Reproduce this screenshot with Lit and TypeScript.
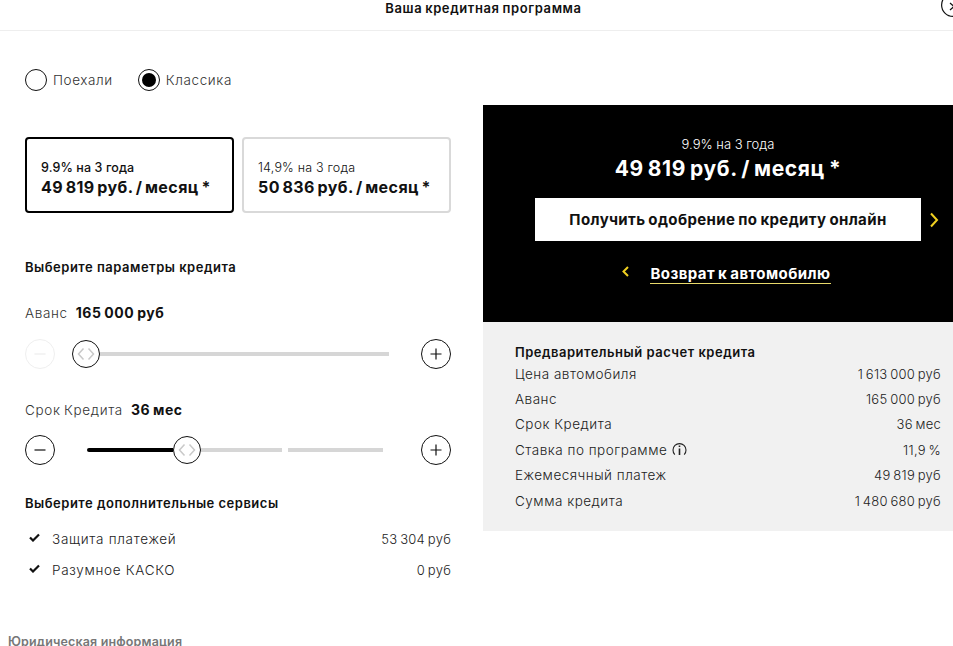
import { LitElement, html, css, svg } from 'lit';
import { customElement } from 'lit/decorators.js';

const summary = [
  { label: 'Цена автомобиля', value: '1 613 000 руб' },
  { label: 'Аванс', value: '165 000 руб' },
  { label: 'Срок Кредита', value: '36 мес' },
  { label: 'Ставка по программе', value: '11,9 %', info: true },
  { label: 'Ежемесячный платеж', value: '49 819 руб' },
  { label: 'Сумма кредита', value: '1 480 680 руб' },
];

const services = [
  { label: 'Защита платежей', value: '53 304 руб' },
  { label: 'Разумное КАСКО', value: '0 руб' },
];

const chevron = (dir: 'left' | 'right') => svg`
  <path d=${dir === 'right' ? 'M2 1.5 L8 8 L2 14.5' : 'M6 1 L1.5 5.5 L6 10'} fill="none" stroke="#f0d020" stroke-width="2"/>
`;

@customElement('app-root')
export class AppRoot extends LitElement {
  static styles = css`
    :host {
      display: block;
      height: 646px;
      overflow: hidden;
      background: #fff;
      color: #111;
      font-family: Inter, 'Liberation Sans', sans-serif;
      font-size: 13px;
    }

    .header {
      position: relative;
      height: 31px;
      box-sizing: border-box;
      padding: 0 0 14px 14px;
      border-bottom: 1px solid #eee;
      display: flex;
      align-items: center;
      justify-content: center;
      font-size: 13px;
      font-weight: 600;
      letter-spacing: 0.6px;
      word-spacing: -1px;
    }

    .close {
      position: absolute;
      left: 941px;
      top: -7px;
      width: 24px;
      height: 24px;
    }

    .main {
      display: grid;
      grid-template-columns: 483px 470px;
    }

    .left {
      padding: 37px 32px 0 25px;
      position: relative;
    }

    .radios {
      display: flex;
      align-items: center;
      height: 23px;
      font-size: 13.5px;
      font-weight: 300;
      color: #333;
      letter-spacing: 0.6px;
    }

    .radio {
      display: flex;
      align-items: center;
      gap: 6px;
      margin-right: 25px;
    }

    .dot {
      width: 20px;
      height: 20px;
      border: 1px solid #111;
      border-radius: 50%;
      display: flex;
      align-items: center;
      justify-content: center;
    }

    .dot.on::after {
      content: '';
      width: 14px;
      height: 14px;
      border-radius: 50%;
      background: #000;
    }

    .cards {
      display: grid;
      grid-template-columns: 209px 209px;
      gap: 8px;
      margin-top: 46px;
    }

    .card {
      height: 76px;
      box-sizing: border-box;
      padding: 20px 14px 0;
      border: 2px solid #d9d9d9;
      border-radius: 4px;
    }

    .card.on {
      border-color: #000;
    }

    .card .rate {
      font-weight: 300;
      font-size: 12.5px;
      line-height: 17px;
      letter-spacing: 0.2px;
    }

    .card.on .rate {
      font-weight: 500;
      letter-spacing: 0.1px;
    }

    .card .price {
      font-size: 16px;
      font-weight: 700;
      line-height: 22px;
      letter-spacing: 0.43px;
      word-spacing: -1.6px;
      white-space: nowrap;
    }

    .section {
      font-size: 13px;
      font-weight: 600;
      line-height: 16px;
      letter-spacing: 0.5px;
    }

    .params {
      margin-top: 46px;
    }

    .param {
      display: flex;
      gap: 8px;
      align-items: baseline;
      font-size: 13.5px;
      font-weight: 300;
      line-height: 18px;
      letter-spacing: 0.65px;
      word-spacing: -1px;
      color: #333;
    }

    .param b {
      font-weight: 700;
      font-size: 14px;
      color: #111;
      letter-spacing: 0.55px;
    }

    .param.first {
      margin-top: 29px;
    }

    .param.second {
      margin-top: 32px;
    }

    .slider {
      display: flex;
      align-items: center;
      height: 30px;
      margin-top: 17px;
    }

    .param.second + .slider {
      margin-top: 16px;
    }

    .step {
      width: 30px;
      height: 30px;
      flex: none;
      box-sizing: border-box;
      border: 1px solid #111;
      border-radius: 50%;
      position: relative;
    }

    .step svg {
      display: block;
      width: 28px;
      height: 28px;
    }

    .step.off {
      border-color: #efefef;
    }

    .track {
      flex: 1;
      display: flex;
      align-items: center;
      height: 28px;
      margin: 0 32px 0 17px;
    }

    .track.wide {
      margin: 0 38px 0 32px;
    }

    .bar {
      height: 4px;
      background: #d6d6d6;
    }

    .bar.fill {
      background: #000;
      border-radius: 2px 0 0 2px;
    }

    .thumb {
      width: 28px;
      height: 28px;
      flex: none;
      box-sizing: border-box;
      border: 1px solid #111;
      border-radius: 50%;
      background: #fff;
    }

    .thumb svg {
      display: block;
      width: 26px;
      height: 26px;
    }

    .extras {
      margin-top: 30px;
    }

    .services {
      margin-top: 12px;
    }

    .service {
      display: flex;
      align-items: center;
      height: 31px;
      font-size: 13.5px;
      font-weight: 300;
      color: #222;
      letter-spacing: 0.7px;
    }

    .check {
      width: 11px;
      height: 9px;
      margin: 0 12px 2px 4px;
      flex: none;
    }

    .service .value {
      margin-left: auto;
      font-size: 13px;
      letter-spacing: 0.24px;
      word-spacing: -1px;
    }

    .legal {
      margin: 48px 0 0 -17px;
      font-size: 12.5px;
      font-weight: 600;
      line-height: 18px;
      letter-spacing: 0.15px;
      color: #777;
    }

    .right {
      margin-top: 74px;
    }

    .promo {
      height: 217px;
      box-sizing: border-box;
      padding: 31px 0 0 20px;
      background: #000;
      color: #fff;
      display: flex;
      flex-direction: column;
      align-items: center;
    }

    .promo .rate {
      font-weight: 300;
      line-height: 16px;
      font-size: 13px;
    }

    .promo .price {
      margin-top: 1px;
      font-size: 21px;
      font-weight: 700;
      line-height: 32px;
      letter-spacing: 0.6px;
      word-spacing: -1.5px;
    }

    .cta-row {
      display: flex;
      align-items: center;
      margin: 13px 0 0 18px;
    }

    .cta {
      width: 386px;
      height: 43px;
      box-sizing: border-box;
      background: #fff;
      color: #111;
      display: flex;
      align-items: center;
      justify-content: center;
      padding-bottom: 1px;
      font-size: 15px;
      font-weight: 700;
      letter-spacing: 0.38px;
      word-spacing: -1px;
    }

    .cta-row svg {
      width: 10px;
      height: 16px;
      margin-left: 8px;
    }

    .back {
      display: flex;
      align-items: center;
      gap: 21px;
      margin: 23px 3px 0 0;
    }

    .back svg {
      width: 7px;
      height: 11px;
      margin-bottom: 5px;
    }

    .back a {
      font-size: 15px;
      font-weight: 700;
      line-height: 19px;
      letter-spacing: 0.45px;
      word-spacing: -1px;
      border-bottom: 1px solid #e8d96a;
    }

    .calc {
      height: 209px;
      box-sizing: border-box;
      padding: 22px 12px 0 32px;
      background: #f1f1f1;
    }

    .rows {
      margin-top: 1px;
    }

    .row {
      display: flex;
      align-items: center;
      justify-content: space-between;
      height: 25.4px;
      font-size: 13.5px;
      font-weight: 300;
      color: #222;
      letter-spacing: 0.5px;
    }

    .row .name {
      display: flex;
      align-items: center;
      gap: 5px;
    }

    .row .value {
      font-size: 13px;
      letter-spacing: 0.27px;
      word-spacing: -1.2px;
    }

    .info {
      width: 15px;
      height: 15px;
    }
  `;

  private renderStep(kind: 'minus' | 'plus', off = false) {
    const stroke = off ? '#ececec' : '#111';
    return html`
      <div class="step ${off ? 'off' : ''}">
        <svg viewBox="0 0 28 28">
          <path d=${kind === 'plus' ? 'M8.5 14H19.5M14 8.5V19.5' : 'M8.5 14H19.5'} stroke=${stroke} stroke-width="1.2" fill="none" />
        </svg>
      </div>
    `;
  }

  private renderThumb() {
    return html`
      <div class="thumb">
        <svg viewBox="0 0 26 26">
          <path d="M10.5 7.5L5.5 13L10.5 18.5M15.5 7.5L20.5 13L15.5 18.5" stroke="#c9c9c9" stroke-width="1.5" fill="none" />
        </svg>
      </div>
    `;
  }

  render() {
    return html`
      <div class="header">
        Ваша кредитная программа
        <svg class="close" viewBox="0 0 24 24">
          <circle cx="12" cy="12" r="11.4" fill="none" stroke="#111" stroke-width="1.2" />
          <path d="M9 10L13 13.5L9 17" fill="none" stroke="#111" stroke-width="1.2" />
        </svg>
      </div>
      <div class="main">
        <div class="left">
          <div class="radios">
            <div class="radio"><span class="dot"></span>Поехали</div>
            <div class="radio"><span class="dot on"></span>Классика</div>
          </div>
          <div class="cards">
            <div class="card on">
              <div class="rate">9.9% на 3 года</div>
              <div class="price">49 819 руб. / месяц *</div>
            </div>
            <div class="card">
              <div class="rate">14,9% на 3 года</div>
              <div class="price">50 836 руб. / месяц *</div>
            </div>
          </div>
          <div class="section params">Выберите параметры кредита</div>
          <div class="param first">Аванс <b>165 000 руб</b></div>
          <div class="slider">
            ${this.renderStep('minus', true)}
            <div class="track">
              ${this.renderThumb()}
              <div class="bar" style="flex:1"></div>
            </div>
            ${this.renderStep('plus')}
          </div>
          <div class="param second">Срок Кредита <b>36 мес</b></div>
          <div class="slider">
            ${this.renderStep('minus')}
            <div class="track wide">
              <div class="bar fill" style="width:86px"></div>
              ${this.renderThumb()}
              <div class="bar" style="width:81px"></div>
              <div class="bar" style="width:95px;margin-left:6px"></div>
            </div>
            ${this.renderStep('plus')}
          </div>
          <div class="section extras">Выберите дополнительные сервисы</div>
          <div class="services">
            ${services.map(
              (s) => html`
                <div class="service">
                  <svg class="check" viewBox="0 0 11 9">
                    <path d="M1 4.5L4 7.5L10 1.5" fill="none" stroke="#111" stroke-width="2.2" />
                  </svg>
                  ${s.label}
                  <span class="value">${s.value}</span>
                </div>
              `
            )}
          </div>
          <div class="legal">Юридическая информация</div>
        </div>
        <div class="right">
          <div class="promo">
            <div class="rate">9.9% на 3 года</div>
            <div class="price">49 819 руб. / месяц *</div>
            <div class="cta-row">
              <div class="cta">Получить одобрение по кредиту онлайн</div>
              <svg viewBox="0 0 10 16">${chevron('right')}</svg>
            </div>
            <div class="back">
              <svg viewBox="0 0 7 11">${chevron('left')}</svg>
              <a>Возврат к автомобилю</a>
            </div>
          </div>
          <div class="calc">
            <div class="section">Предварительный расчет кредита</div>
            <div class="rows">
              ${summary.map(
                (r) => html`
                  <div class="row">
                    <span class="name">
                      ${r.label}
                      ${r.info
                        ? html`<svg class="info" viewBox="0 0 15 15">
                            <path d="M2.8 12.6A6.5 6.5 0 1 1 12.2 12.6" fill="none" stroke="#222" stroke-width="1.1" />
                            <path d="M7.5 6.5V13M7.5 3.4V5" stroke="#222" stroke-width="1.6" fill="none" />
                          </svg>`
                        : ''}
                    </span>
                    <span class="value">${r.value}</span>
                  </div>
                `
              )}
            </div>
          </div>
        </div>
      </div>
    `;
  }
}

declare global {
  interface HTMLElementTagNameMap {
    'app-root': AppRoot;
  }
}
